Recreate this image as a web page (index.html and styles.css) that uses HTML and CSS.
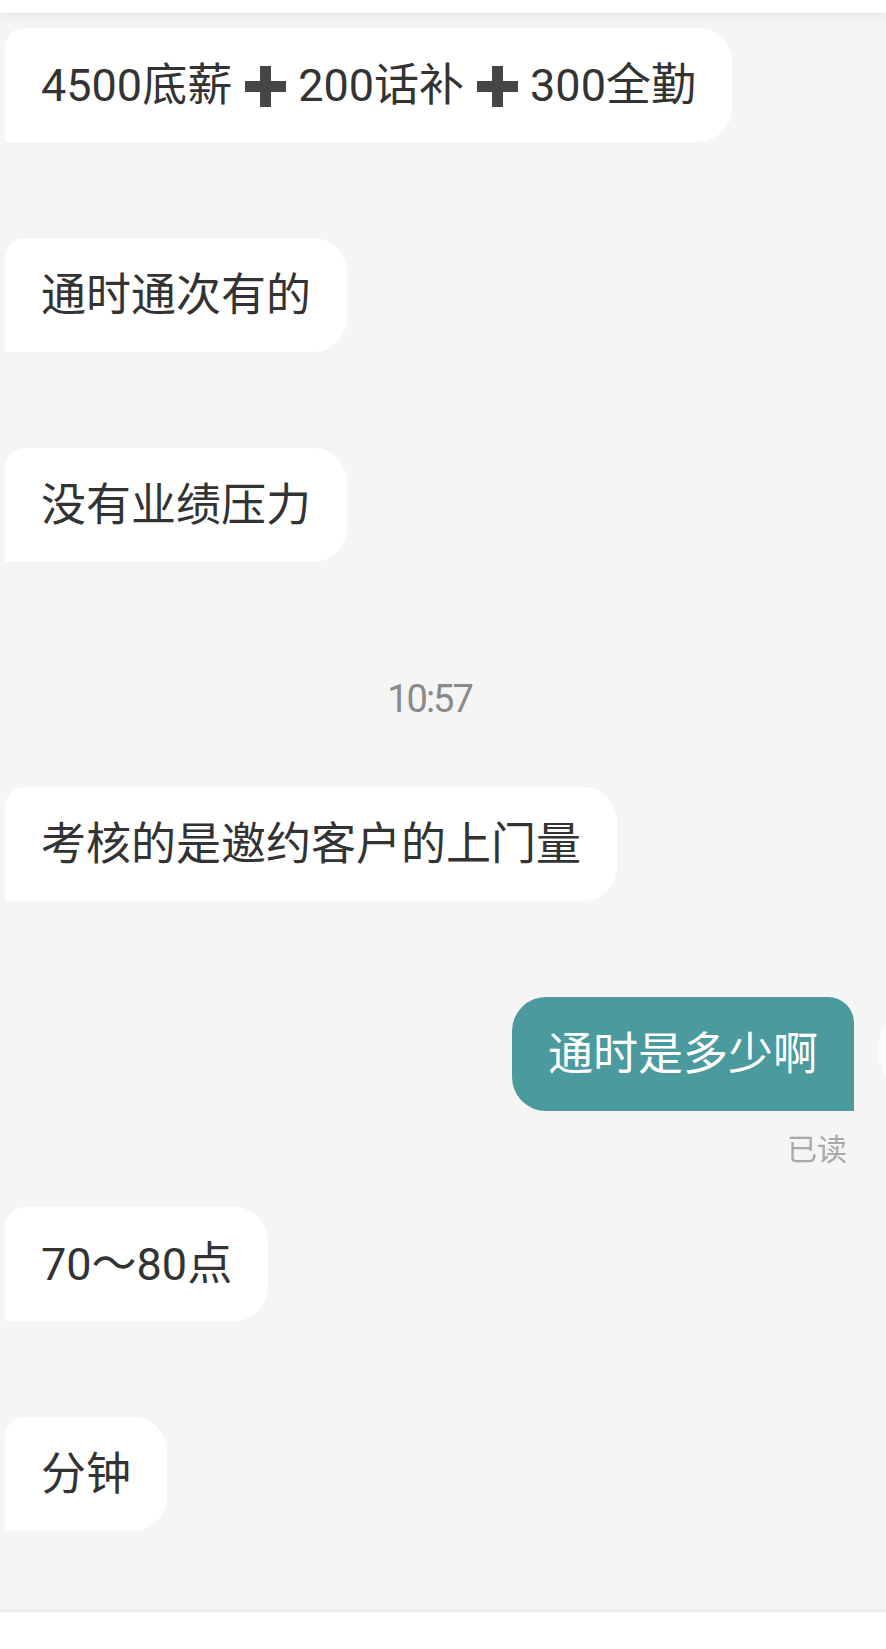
FILE: index.html
```html
<!DOCTYPE html>
<html lang="zh-CN">
<head>
<meta charset="utf-8">
<title>聊天</title>
<link rel="stylesheet" href="styles.css">
</head>
<body>
<div class="page">
  <header class="topbar"></header>
  <main class="chat">
    <div class="row row-in first">
      <div class="bubble in">4500底薪<span class="plus" aria-label="➕"></span>200话补<span class="plus" aria-label="➕"></span>300全勤</div>
    </div>
    <div class="row row-in">
      <div class="bubble in">通时通次有的</div>
    </div>
    <div class="row row-in">
      <div class="bubble in">没有业绩压力</div>
    </div>
    <div class="time">10:57</div>
    <div class="row row-in after-time">
      <div class="bubble in">考核的是邀约客户的上门量</div>
    </div>
    <div class="row row-out">
      <div class="bubble out">通时是多少啊</div>
      <div class="avatar"></div>
    </div>
    <div class="receipt">已读</div>
    <div class="row row-in after-receipt">
      <div class="bubble in">70～80点</div>
    </div>
    <div class="row row-in">
      <div class="bubble in">分钟</div>
    </div>
  </main>
  <footer class="bottombar"></footer>
</div>
</body>
</html>
```

FILE: styles.css
```css
html, body {
  margin: 0;
  padding: 0;
}
body {
  background: #f5f5f5;
  overflow: hidden;
  font-family: Roboto, "Noto Sans CJK SC", sans-serif;
}
.page {
  width: 886px;
  height: 1649px;
  display: flex;
  flex-direction: column;
  overflow: hidden;
}
.topbar {
  height: 13px;
  background: #ffffff;
  box-shadow: 0 2px 12px rgba(0, 0, 0, 0.08);
  position: relative;
  z-index: 2;
}
.chat {
  display: flex;
  flex-direction: column;
  padding-top: 15px;
}
.row {
  display: flex;
  margin-top: 96px;
}
.row.first {
  margin-top: 0;
}
.row-in {
  justify-content: flex-start;
  padding-left: 5px;
}
.row-out {
  justify-content: flex-end;
  align-items: flex-start;
  margin-right: -92px;
}
.row.after-time {
  margin-top: 0;
}
.row.after-receipt {
  margin-top: 42px;
}
.bubble {
  font-size: 45px;
  line-height: 56px;
  padding: 30px 36px 28px 36px;
  white-space: nowrap;
  display: flex;
  align-items: center;
}
.in {
  background: #ffffff;
  color: #333333;
  border-radius: 20px 34px 34px 0;
}
.out {
  background: #4a9a9e;
  color: #ffffff;
  border-radius: 34px 26px 0 34px;
}
.plus {
  display: inline-block;
  position: relative;
  width: 41px;
  height: 41px;
  margin: 0 12px 0 13px;
}
.plus::before,
.plus::after {
  content: "";
  position: absolute;
  background: #464646;
}
.plus::before {
  left: 15px;
  top: 0;
  width: 11px;
  height: 41px;
}
.plus::after {
  left: 0;
  top: 15px;
  width: 41px;
  height: 11px;
}
.avatar {
  width: 100px;
  height: 100px;
  border-radius: 50%;
  background: #fbfbfb;
  margin-left: 24px;
  margin-top: 3px;
  flex-shrink: 0;
}
.time {
  margin: 117px 27px 68px 0;
  height: 40px;
  line-height: 40px;
  font-size: 38px;
  letter-spacing: -2px;
  color: #8a8a8a;
  text-align: center;
}
.receipt {
  align-self: flex-end;
  margin: 19px 39px 0 0;
  font-family: "Noto Sans CJK SC", sans-serif;
  font-size: 30px;
  line-height: 35px;
  color: #a9a9a9;
}
.bottombar {
  margin-top: auto;
  height: 37px;
  background: #ffffff;
  border-top: 3px solid #ebebeb;
}
```
